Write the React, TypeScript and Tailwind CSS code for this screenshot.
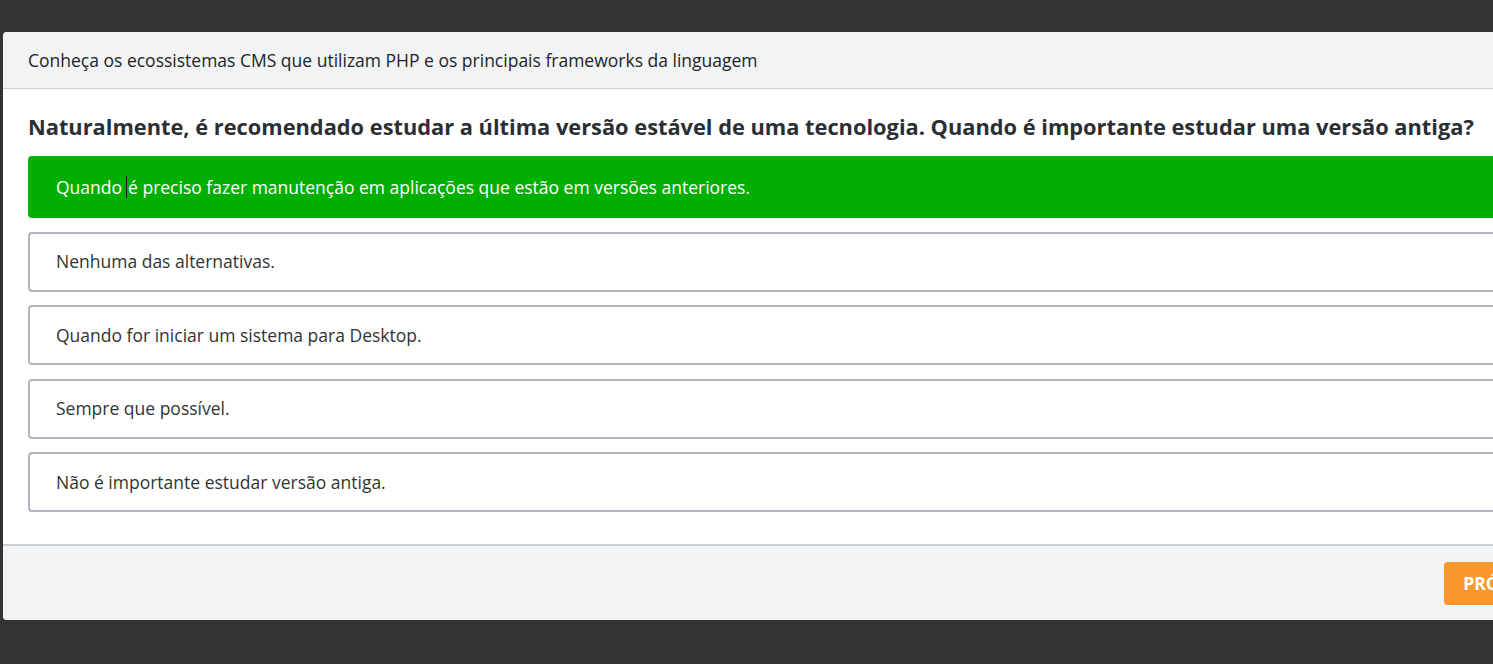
import React from 'react';

const OPTIONS = [
  'Nenhuma das alternativas.',
  'Quando for iniciar um sistema para Desktop.',
  'Sempre que possível.',
  'Não é importante estudar versão antiga.',
];

export default function App() {
  return (
    <div
      className="w-full h-[664px] bg-[#333333] overflow-hidden pt-[32px] pl-[3px]"
      style={{ fontFamily: '"Open Sans", "Noto Sans", sans-serif' }}
    >
      <div className="w-[1587px] bg-white rounded-[4px] overflow-hidden">
        <div className="h-[57px] bg-[#f2f3f5] border-b border-[#c9ced4] px-[25px] flex items-center">
          <span className="text-[17.5px] text-[#212529]">
            Conheça os ecossistemas CMS que utilizam PHP e os principais frameworks da linguagem
          </span>
        </div>

        <div className="px-[25px] pt-[23px] pb-[32px]">
          <h2 className="text-[21.8px] leading-[30px] font-bold text-[#2b2f33] mb-[14px] whitespace-nowrap">
            Naturalmente, é recomendado estudar a última versão estável de uma tecnologia. Quando é importante estudar uma versão antiga?
          </h2>

          <div className="flex flex-col gap-[13.5px]">
            <div className="h-[62px] rounded-[4px] bg-[#00af00] flex items-center px-[28px] text-[17.5px] text-white">
              Quando
              <span className="inline-block w-[1px] h-[22px] bg-[#1a1a1a] ml-[4px] mr-[1px]" />
              é preciso fazer manutenção em aplicações que estão em versões anteriores.
            </div>
            {OPTIONS.map((opt) => (
              <div
                key={opt}
                className="h-[60px] rounded-[4px] border-2 border-[#adb4bc] bg-white flex items-center px-[26px] text-[17.5px] text-[#333333]"
              >
                {opt}
              </div>
            ))}
          </div>
        </div>

        <div className="h-[76px] bg-[#f2f3f5] border-t-2 border-[#c9ced4] flex items-center justify-end px-[25px]">
          <button className="w-[121px] h-[43px] rounded-[4px] bg-[#f9972c] text-white font-bold text-[17.5px]">
            PRÓXIMA
          </button>
        </div>
      </div>
    </div>
  );
}
